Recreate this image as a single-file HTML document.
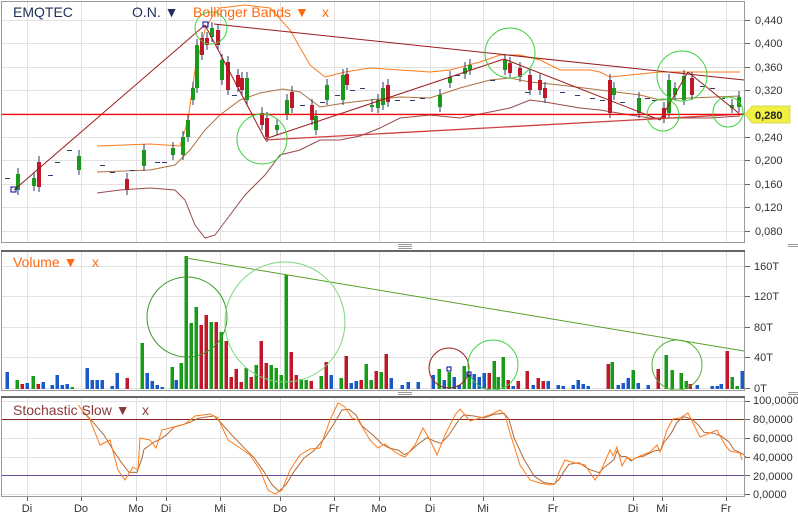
<!DOCTYPE html>
<html><head><meta charset="utf-8"><style>
html,body{margin:0;padding:0;background:#fff;width:798px;height:518px;overflow:hidden}
svg{display:block}
text{font-family:"Liberation Sans",sans-serif}
</style></head><body>
<svg id="s" width="798" height="518" xmlns="http://www.w3.org/2000/svg">
<rect width="798" height="518" fill="#fff"/>
<g id="grid" stroke="#e2e2e2" stroke-width="1"></g>
<g id="draw"></g>
<!-- frames -->
<rect x="1.5" y="1.5" width="743" height="241" fill="none" stroke="#9a9a9a"/>
<rect x="1.5" y="250.5" width="743" height="140" fill="none" stroke="#9a9a9a"/>
<line x1="1" y1="251" x2="745" y2="251" stroke="#666" stroke-width="2"/>
<rect x="1.5" y="396.5" width="743" height="100" fill="none" stroke="#9a9a9a"/>
<line x1="1" y1="397" x2="745" y2="397" stroke="#666" stroke-width="2"/>
<g stroke="#999"><line x1="398" y1="244.5" x2="412" y2="244.5"/><line x1="398" y1="246.5" x2="412" y2="246.5"/><line x1="398" y1="248.5" x2="412" y2="248.5"/>
<line x1="398" y1="392.5" x2="412" y2="392.5"/><line x1="398" y1="394.5" x2="412" y2="394.5"/>
<line x1="788" y1="244.5" x2="798" y2="244.5"/><line x1="788" y1="246.5" x2="798" y2="246.5"/><line x1="788" y1="392.5" x2="798" y2="392.5"/><line x1="788" y1="394.5" x2="798" y2="394.5"/></g>
<!-- labels -->
<text x="13" y="17" font-size="14" fill="#1f2f5a">EMQTEC</text>
<text x="132" y="17" font-size="14" fill="#1f2f5a">O.N. ▼</text>
<text x="193" y="17" font-size="14" fill="#ff6a10">Bollinger Bands ▼</text>
<text x="322" y="17" font-size="14" fill="#ff6a10">x</text>
<text x="13" y="267" font-size="14" fill="#ff6a10">Volume ▼</text>
<text x="92" y="267" font-size="14" fill="#ff6a10">x</text>
<text x="13" y="415" font-size="14" fill="#8b3a3a">Stochastic Slow ▼</text>
<text x="142" y="415" font-size="14" fill="#8b3a3a">x</text>
<g font-size="11" fill="#333" id="ax"></g>
<g font-size="11" fill="#333" text-anchor="middle">
<text x="27" y="512">Di</text><text x="81" y="512">Do</text><text x="136" y="512">Mo</text><text x="166" y="512">Di</text><text x="220" y="512">Mi</text><text x="280" y="512">Do</text><text x="334" y="512">Fr</text><text x="379" y="512">Mo</text><text x="430" y="512">Di</text><text x="483" y="512">Mi</text><text x="553" y="512">Fr</text><text x="633" y="512">Di</text><text x="662" y="512">Mi</text><text x="726" y="512">Fr</text>
</g>
<g font-size="11" fill="#333">
<text x="755" y="24">0,440</text><text x="755" y="47">0,400</text><text x="755" y="71">0,360</text><text x="755" y="94">0,320</text><text x="755" y="141">0,240</text><text x="755" y="164">0,200</text><text x="755" y="188">0,160</text><text x="755" y="211">0,120</text><text x="755" y="235">0,080</text>
<text x="754" y="270">160T</text><text x="754" y="300">120T</text><text x="754" y="331">80T</text><text x="754" y="361">40T</text><text x="754" y="392">0T</text>
<text x="753" y="404">100,0000</text><text x="753" y="423">80,0000</text><text x="753" y="442">60,0000</text><text x="753" y="461">40,0000</text><text x="753" y="480">20,0000</text><text x="753" y="498">0,0000</text>
</g>
<polygon points="745,114 752,106 790,106 790,123 752,123" fill="#f0f040" stroke="#d8d860"/>
<text x="755" y="119" font-size="11" font-weight="bold" fill="#222">0,280</text>
</svg>
<script>
var NS="http://www.w3.org/2000/svg",g=document.getElementById('grid'),d=document.getElementById('draw'),ax=document.getElementById('ax');
function el(p,t,a){var e=document.createElementNS(NS,t);for(var k in a)e.setAttribute(k,a[k]);p.appendChild(e);return e}
var vx=[27,81,136,166,220,280,334,379,430,483,553,633,662,726];
vx.forEach(function(x){el(g,'line',{x1:x+.5,y1:2,x2:x+.5,y2:242});el(g,'line',{x1:x+.5,y1:251,x2:x+.5,y2:390});el(g,'line',{x1:x+.5,y1:397,x2:x+.5,y2:496});el(d,'line',{x1:x+.5,y1:497,x2:x+.5,y2:501,stroke:'#666'})});
[20,43,67,90,113,137,160,184,207,231].forEach(function(y){el(g,'line',{x1:2,y1:y+.5,x2:744,y2:y+.5});el(d,'line',{x1:745,y1:y+.5,x2:750,y2:y+.5,stroke:'#666'})});
[266,296,327,357,388].forEach(function(y){el(g,'line',{x1:2,y1:y+.5,x2:744,y2:y+.5});el(d,'line',{x1:745,y1:y+.5,x2:750,y2:y+.5,stroke:'#666'})});
[401,419,438,457,475,494].forEach(function(y){el(g,'line',{x1:2,y1:y+.5,x2:744,y2:y+.5});el(d,'line',{x1:745,y1:y+.5,x2:750,y2:y+.5,stroke:'#666'})});
function pl(pts,c,w){el(d,'polyline',{points:pts.map(function(p){return p.join(',')}).join(' '),fill:'none',stroke:c,'stroke-width':w||1})}
// bollinger
pl([[97,146],[150,144],[180,146],[188,120],[195,70],[205,30],[213,15],[220,8],[245,5],[270,8],[290,30],[310,65],[325,77],[345,72],[370,68],[400,70],[430,72],[450,70],[480,62],[500,55],[520,55],[540,60],[560,70],[590,70],[600,72],[610,77],[630,75],[660,72],[680,72],[700,72],[740,72]],'#ff7a1a');
pl([[97,172],[150,170],[175,165],[190,150],[205,130],[220,115],[240,100],[260,93],[283,89],[300,92],[320,107],[345,103],[370,100],[400,97],[430,98],[460,88],[490,80],[510,78],[530,82],[560,85],[600,90],[640,95],[660,100],[690,98],[740,96]],'#b07040');
pl([[97,193],[120,190],[150,188],[175,190],[185,200],[195,225],[205,238],[215,235],[230,215],[245,195],[265,175],[280,155],[300,150],[320,140],[340,140],[360,136],[380,128],[400,118],[430,115],[460,118],[490,112],[510,108],[530,100],[545,102],[580,108],[600,110],[630,115],[650,118],[680,118],[710,118],[740,116]],'#9a4a4a');
// candles
var C=[[16,174,190,'g'],[32,178,186,'g'],[37,162,187,'r'],[77,156,170,'g'],[125,179,190,'r'],[142,150,166,'g'],[171,148,155,'g'],[181,137,155,'g'],[186,120,137,'g'],[191,88,100,'g'],[195,45,88,'g'],[200,38,55,'r'],[205,38,45,'r'],[210,28,37,'g'],[216,30,45,'r'],[220,60,80,'g'],[226,62,90,'r'],[236,75,87,'r'],[240,78,90,'r'],[245,78,100,'g'],[260,113,125,'r'],[265,118,137,'r'],[275,125,130,'g'],[285,100,115,'g'],[290,92,108,'r'],[310,105,120,'r'],[314,116,130,'g'],[325,85,100,'g'],[341,75,100,'g'],[345,74,85,'r'],[370,105,107,'g'],[376,100,108,'g'],[381,88,105,'g'],[386,85,102,'r'],[438,95,107,'g'],[448,77,83,'g'],[463,68,74,'g'],[468,65,70,'g'],[503,60,70,'g'],[508,63,73,'r'],[518,68,77,'r'],[528,75,90,'r'],[538,80,90,'r'],[543,88,98,'r'],[608,80,113,'r'],[612,88,95,'g'],[637,98,113,'g'],[662,108,118,'r'],[667,80,113,'g'],[673,88,95,'g'],[682,76,100,'g'],[690,78,95,'r'],[730,105,108,'g'],[737,97,107,'g']];
C.forEach(function(c){var col=c[3]=='g'?'#1a9a1a':'#c0182a';el(d,'line',{x1:c[0]+2,y1:c[1]-6,x2:c[0]+2,y2:c[2]+5,stroke:'#2a3a6a'});el(d,'rect',{x:c[0],y:c[1],width:4,height:c[2]-c[1],fill:col})});
[[5,178],[48,175],[55,162],[67,150],[100,165],[110,172],[130,170],[155,162],[162,162],[232,95],[300,105],[320,102],[335,95],[350,90],[360,88],[395,100],[410,100],[420,98],[455,75],[490,80],[525,92],[560,92],[575,95],[590,98],[600,100],[620,102],[645,98],[652,100],[700,86],[710,88],[720,98]].forEach(function(p){el(d,'line',{x1:p[0],y1:p[1]+.5,x2:p[0]+5,y2:p[1]+.5,stroke:'#2a3a6a'})});
// trend lines
var R='#9a1a1a';
pl([[14,190],[205,25]],R);pl([[205,25],[265,139]],R);pl([[214,24],[744,80]],R);pl([[265,139],[504,59]],R);pl([[504,59],[660,120]],R);pl([[265,140],[744,114]],'#d04040',1.3);pl([[660,120],[688,72]],R);pl([[688,72],[741,115]],R);
el(d,'line',{x1:2,y1:114.5,x2:744,y2:114.5,stroke:'#ff0000','stroke-width':1.3});
el(d,'rect',{x:11,y:187,width:5,height:5,fill:'none',stroke:'#0000aa'});el(d,'rect',{x:203,y:22,width:5,height:5,fill:'none',stroke:'#0000aa'});
[[211,28,16],[262,139,25],[510,53,25],[682,76,25],[663,115,16],[728,112,15]].forEach(function(c){el(d,'circle',{cx:c[0],cy:c[1],r:c[2],fill:'none',stroke:'#3ad03a'})});
// volume
var V=[[7,372,'b'],[17,380,'g'],[22,384,'r'],[27,383,'b'],[33,376,'g'],[38,384,'r'],[43,382,'b'],[52,385,'b'],[57,375,'b'],[62,385,'b'],[67,384,'b'],[72,387,'g'],[87,368,'b'],[92,380,'b'],[97,380,'b'],[102,380,'b'],[112,386,'b'],[117,373,'b'],[127,378,'r'],[142,343,'g'],[147,373,'b'],[152,381,'b'],[157,385,'b'],[162,387,'b'],[172,367,'g'],[176,380,'b'],[181,363,'g'],[186,256,'g'],[191,323,'g'],[196,307,'g'],[201,325,'r'],[206,315,'r'],[211,322,'g'],[216,322,'r'],[221,332,'g'],[226,341,'r'],[231,377,'r'],[236,369,'r'],[241,382,'r'],[246,368,'g'],[251,377,'r'],[256,365,'g'],[261,341,'r'],[266,363,'r'],[271,365,'g'],[276,368,'g'],[281,375,'g'],[286,275,'g'],[291,352,'r'],[296,375,'r'],[301,379,'g'],[306,380,'g'],[311,381,'r'],[321,376,'g'],[326,362,'r'],[331,375,'b'],[341,378,'g'],[346,356,'r'],[351,383,'b'],[356,381,'b'],[361,380,'r'],[366,364,'g'],[371,380,'g'],[376,371,'r'],[381,372,'g'],[386,354,'r'],[391,378,'b'],[402,385,'b'],[408,382,'b'],[418,382,'b'],[433,375,'b'],[439,369,'g'],[444,380,'b'],[449,372,'g'],[454,377,'b'],[459,385,'b'],[464,366,'g'],[469,374,'g'],[474,374,'b'],[479,377,'b'],[484,373,'b'],[489,373,'r'],[494,361,'g'],[498,377,'g'],[503,357,'g'],[508,380,'r'],[513,386,'b'],[518,381,'r'],[527,371,'r'],[533,385,'b'],[538,378,'r'],[543,381,'r'],[548,381,'b'],[558,385,'b'],[563,386,'b'],[573,385,'b'],[578,380,'b'],[583,384,'b'],[588,386,'b'],[608,364,'r'],[612,362,'g'],[618,385,'b'],[623,383,'b'],[628,378,'b'],[633,370,'g'],[638,383,'b'],[648,385,'b'],[658,369,'r'],[666,355,'g'],[672,370,'g'],[681,373,'g'],[686,381,'g'],[690,384,'r'],[697,385,'b'],[712,386,'b'],[717,386,'b'],[721,384,'b'],[727,351,'r'],[732,377,'g'],[737,386,'g'],[742,371,'b']];
var VC={b:'#1a5ac8',g:'#1a9a1a',r:'#c0182a'};
V.forEach(function(v){el(d,'rect',{x:v[0]-1.5,y:v[1],width:3.5,height:389-v[1],fill:VC[v[2]]})});
pl([[186,258],[744,351]],'#5aa02a');
el(d,'circle',{cx:187,cy:317,r:40,fill:'none',stroke:'#3a9a2a'});el(d,'circle',{cx:285,cy:322,r:60,fill:'none',stroke:'#7ad87a'});el(d,'circle',{cx:449,cy:368,r:20,fill:'none',stroke:'#a02020'});el(d,'circle',{cx:493,cy:365,r:25,fill:'none',stroke:'#3ad03a'});el(d,'circle',{cx:677,cy:365,r:25,fill:'none',stroke:'#4ab02a'});
el(d,'rect',{x:447,y:367,width:4,height:4,fill:'none',stroke:'#0000aa'});el(d,'rect',{x:467,y:372,width:4,height:4,fill:'none',stroke:'#0000aa'});
// stochastic
el(d,'line',{x1:2,y1:419.5,x2:744,y2:419.5,stroke:'#8b2e1e'});el(d,'line',{x1:2,y1:475.5,x2:744,y2:475.5,stroke:'#6a4a9a'});
var K=[[78,405],[90,420],[100,445],[110,440],[118,470],[125,480],[133,467],[138,470],[140,438],[150,440],[156,448],[162,430],[170,428],[185,424],[195,416],[210,414],[218,418],[228,440],[240,448],[250,455],[260,470],[268,490],[275,494],[282,490],[290,470],[300,455],[310,449],[320,448],[330,420],[338,403],[345,407],[352,418],[358,420],[370,440],[378,448],[385,444],[395,452],[400,455],[405,457],[415,445],[423,428],[430,440],[437,455],[445,435],[455,415],[460,409],[470,421],[480,418],[490,415],[500,410],[505,415],[510,433],[520,465],[530,480],[540,483],[550,485],[555,484],[560,470],[565,460],[575,463],[585,465],[595,480],[600,473],[610,450],[613,456],[617,447],[622,466],[627,457],[632,460],[640,456],[650,452],[657,445],[660,452],[667,430],[673,419],[680,418],[688,413],[695,427],[700,437],[710,433],[717,430],[725,445],[730,451],[740,453],[742,460]];
var D=[];for(var i=0;i<K.length;i++){var a=K[Math.max(0,i-1)][1],b=K[i][1],c=K[Math.min(K.length-1,i+1)][1];D.push([K[i][0]+4,(a+b+c)/3])}
pl(D,'#b06a3a');pl(K,'#ff7a1a');
</script>
</body></html>
